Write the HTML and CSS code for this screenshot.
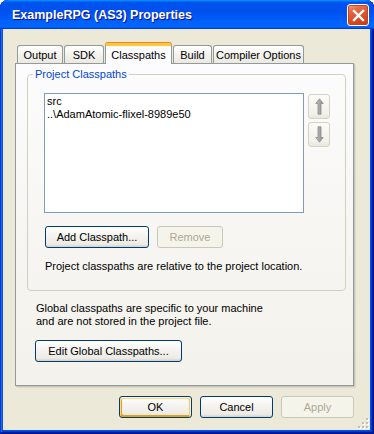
FILE: index.html
```html
<!DOCTYPE html>
<html>
<head>
<meta charset="utf-8">
<link rel="stylesheet" href="styles.css">
</head>
<body>
<div class="window">
  <div class="titlebar">
    <span class="title">ExampleRPG (AS3) Properties</span>
    <button class="close" aria-label="Close">
      <svg width="13" height="13" viewBox="0 0 13 13"><path d="M2 2 L11 11 M11 2 L2 11" stroke="#fff" stroke-width="2.4" stroke-linecap="square"/></svg>
    </button>
  </div>
  <div class="client">
    <div class="tabstrip">
      <div class="tab w-output">Output</div>
      <div class="tab w-sdk">SDK</div>
      <div class="tab selected w-class">Classpaths</div>
      <div class="tab w-build">Build</div>
      <div class="tab w-comp">Compiler Options</div>
    </div>
    <div class="panel">
      <fieldset class="group">
        <legend>Project Classpaths</legend>
        <div class="listrow">
          <div class="listbox">
            <div class="item">src</div>
            <div class="item">..\AdamAtomic-flixel-8989e50</div>
          </div>
          <div class="arrows">
            <div class="arrowbtn">
              <svg width="9" height="17" viewBox="0 0 9 17"><defs><linearGradient id="ga" x1="0" x2="1"><stop offset="0" stop-color="#c4c4c4"/><stop offset="1" stop-color="#8a8a8a"/></linearGradient></defs><path d="M4.5 0.8 L8.2 5.5 L6 5.5 L6 16.2 L3 16.2 L3 5.5 L0.8 5.5 Z" fill="url(#ga)" stroke="#8c8c8c" stroke-width="0.8"/></svg>
            </div>
            <div class="arrowbtn">
              <svg width="9" height="17" viewBox="0 0 9 17"><defs><linearGradient id="gb" x1="0" x2="1"><stop offset="0" stop-color="#c4c4c4"/><stop offset="1" stop-color="#8a8a8a"/></linearGradient></defs><path d="M4.5 16.2 L8.2 11.5 L6 11.5 L6 0.8 L3 0.8 L3 11.5 L0.8 11.5 Z" fill="url(#gb)" stroke="#8c8c8c" stroke-width="0.8"/></svg>
            </div>
          </div>
        </div>
        <div class="btnrow">
          <button class="btn w-add">Add Classpath...</button>
          <button class="btn disabled w-remove">Remove</button>
        </div>
        <p class="note">Project classpaths are relative to the project location.</p>
      </fieldset>
      <p class="global">Global classpaths are specific to your machine<br>and are not stored in the project file.</p>
      <button class="btn w-edit">Edit Global Classpaths...</button>
    </div>
    <div class="footer">
      <button class="btn default w-foot">OK</button>
      <button class="btn w-foot">Cancel</button>
      <button class="btn disabled w-foot">Apply</button>
    </div>
    <svg class="grip" width="12" height="12" viewBox="0 0 12 12">
      <g fill="#fff"><rect x="10" y="2" width="2" height="2"/><rect x="6" y="6" width="2" height="2"/><rect x="10" y="6" width="2" height="2"/><rect x="2" y="10" width="2" height="2"/><rect x="6" y="10" width="2" height="2"/><rect x="10" y="10" width="2" height="2"/></g>
      <g fill="#c1beb3"><rect x="9" y="1" width="2" height="2"/><rect x="5" y="5" width="2" height="2"/><rect x="9" y="5" width="2" height="2"/><rect x="1" y="9" width="2" height="2"/><rect x="5" y="9" width="2" height="2"/><rect x="9" y="9" width="2" height="2"/></g>
    </svg>
  </div>
</div>
</body>
</html>
```

FILE: styles.css
```css
* { box-sizing: border-box; }
html, body { margin: 0; padding: 0; background: #fff; }
body {
  font-family: "Liberation Sans", Arial, sans-serif;
  font-size: 11px;
  color: #000;
}
.window {
  width: 374px;
  height: 434px;
  display: flex;
  flex-direction: column;
  background: #0055e5;
  border-radius: 8px 8px 0 0;
  box-shadow: inset -1px -1px #00138c, inset 1px 1px #0831d9, inset -2px -2px #001ea0, inset 2px 2px #166aee, inset -3px -3px #003bda, inset 3px 3px #0855dd;
  overflow: hidden;
}
.titlebar {
  height: 29px;
  flex: none;
  display: flex;
  align-items: center;
  justify-content: space-between;
  padding: 0 5px 0 12px;
  background: linear-gradient(180deg, #0997ff, #0053ee 8%, #0050ee 40%, #06f 88%, #06f 93%, #005bff 95%, #003dd7 96%, #003dd7);
  border-radius: 8px 8px 0 0;
}
.title {
  color: #fff;
  font-weight: bold;
  font-size: 12.5px;
  letter-spacing: 0;
  text-shadow: 1px 1px #0f1089;
  padding-top: 1px;
}
.close {
  width: 22px;
  height: 22px;
  margin-top: 1px;
  padding: 0;
  border: 1px solid #fff;
  border-radius: 3px;
  display: flex;
  align-items: center;
  justify-content: center;
  box-shadow: inset 0 0 0 1px #c0471d;
  background: linear-gradient(160deg, #f5a58a 0%, #e76a44 25%, #d9481f 70%, #c23b14 100%);
}
.client {
  flex: 1;
  position: relative;
  margin: 0 4px 4px 3px;
  background: #ece9d8;
  padding: 14px 16px 0 12px;
  display: flex;
  flex-direction: column;
}
.tabstrip {
  display: flex;
  align-items: flex-end;
  height: 21px;
  margin: 0 0 -1px 2px;
  gap: 1px;
  position: relative;
  z-index: 2;
}
.tab {
  height: 18px;
  margin-bottom: 1px;
  border: 1px solid #919b9c;
  border-bottom: none;
  border-radius: 3px 3px 0 0;
  background: linear-gradient(180deg, #fff 0%, #f4f3ee 50%, #eae8e0 100%);
  display: flex;
  align-items: center;
  justify-content: center;
  padding-top: 1px;
  white-space: nowrap;
}
.tab.selected {
  height: 21px;
  margin-bottom: 0;
  background: #fcfcfe;
  border-top: 3px solid #ffc73c;
  box-shadow: 0 -1px 0 #e68b2c;
  padding-top: 0;
}
.w-output { width: 46px; }
.w-sdk { width: 40px; }
.w-class { width: 67px; }
.w-build { width: 39px; }
.w-comp { width: 91px; }

.panel {
  height: 323px;
  width: 339px;
  flex: none;
  border: 1px solid #919b9c;
  background: linear-gradient(180deg, #fcfcfe 0%, #f6f5f1 60%, #f3f2ec 100%);
  box-shadow: 1px 1px 0 #c7c5b7, 2px 2px 0 #dedbcd;
  padding: 4px 0 0 11px;
  display: flex;
  flex-direction: column;
  align-items: flex-start;
}
.group {
  width: 319px;
  margin: 0;
  padding: 12px 8px 17px 16px;
  border: 1px solid #d0d0bf;
  border-radius: 4px;
  min-inline-size: 0;
}
.group legend {
  color: #0046d5;
  line-height: 13px;
  padding: 0 2px;
  margin-left: -11px;
}
.listrow {
  display: flex;
  gap: 4px;
  align-items: flex-start;
}
.listbox {
  width: 260px;
  height: 120px;
  background: #fff;
  border: 1px solid #7f9db9;
  padding: 1px 2px;
}
.item { line-height: 12.5px; white-space: nowrap; }
.arrows {
  display: flex;
  flex-direction: column;
  gap: 3px;
  margin-top: 1px;
}
.arrowbtn {
  width: 22px;
  height: 25px;
  border: 1px solid #d5d2c4;
  border-radius: 3px;
  background: linear-gradient(180deg, #fbfbf8 0%, #f2f1ea 80%, #e9e7dd 100%);
  display: flex;
  align-items: center;
  justify-content: center;
}
.btnrow {
  display: flex;
  gap: 8px;
  margin: 13px 0 0 1px;
}
.btn {
  height: 22px;
  padding: 0;
  font-family: inherit;
  font-size: 11px;
  color: #000;
  border: 1px solid #003c74;
  border-radius: 3px;
  background: linear-gradient(180deg, #fff 0%, #f5f4f0 40%, #ecebe6 86%, #d6d0c5 100%);
  text-align: center;
  flex: none;
}
.btn.disabled {
  color: #aca899;
  border-color: #c9c7ba;
  background: #f5f4ea;
}
.btn.default {
  box-shadow: inset -1px 1px #fff0cf, inset 1px 2px #fdd889, inset -2px 2px #fbc761, inset 2px -2px #e5a01a;
}
.w-add { width: 104px; }
.w-remove { width: 66px; }
.w-edit { width: 147px; margin-left: 8px; }
.w-foot { width: 73px; }
.note {
  margin: 12px 0 0 1px;
  line-height: 13px;
}
.global {
  margin: 11px 0 0 9px;
  line-height: 13px;
}
.global + .btn { margin-top: 12px; }
.footer {
  display: flex;
  justify-content: flex-end;
  gap: 8px;
  margin-top: 10px;
}
.grip {
  position: absolute;
  right: 1px;
  bottom: 1px;
}
```
